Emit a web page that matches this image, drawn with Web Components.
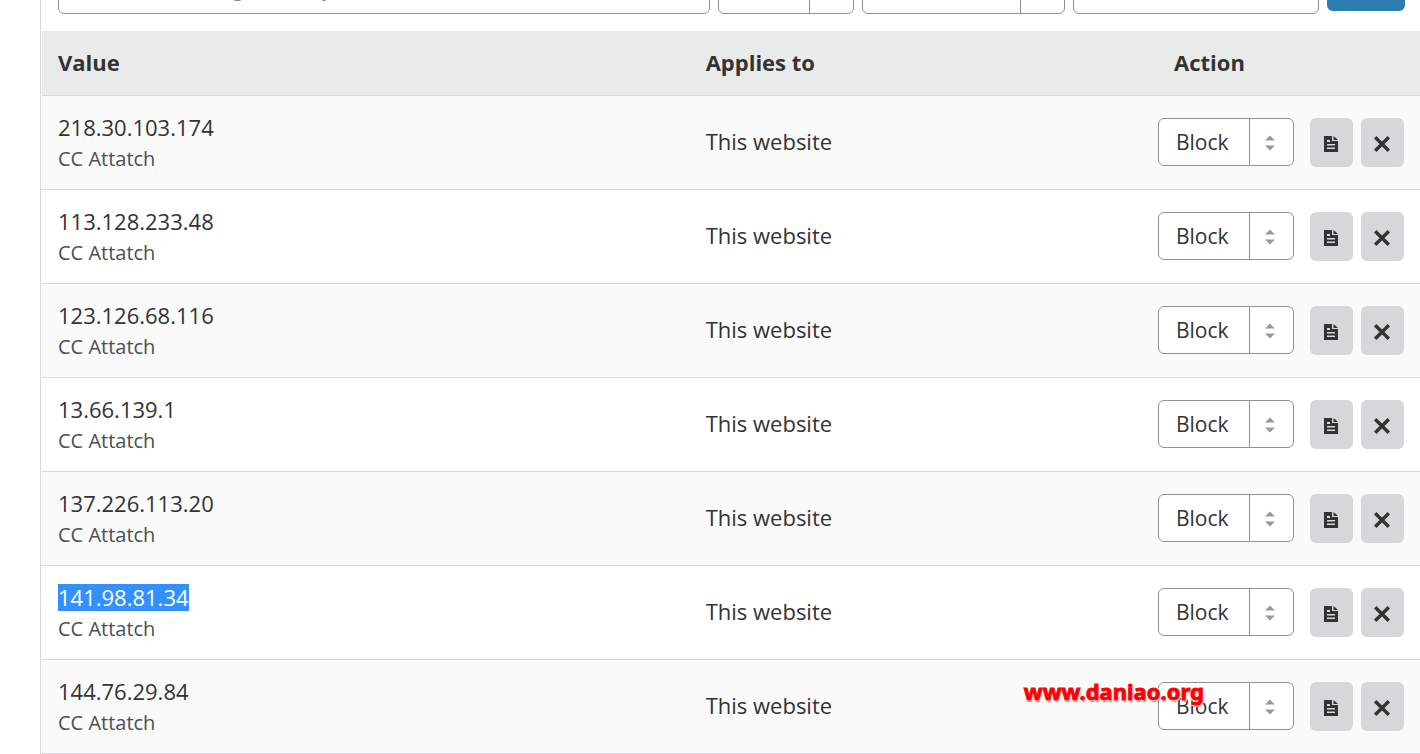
<!DOCTYPE html>
<html lang="en">
<head>
<meta charset="utf-8">
<title>IP Access Rules</title>
<style>
body{margin:0;background:#fff;color:#333;font:22px/30px "Open Sans","Noto Sans",sans-serif;overflow:hidden}
</style>
</head>
<body>
<access-rules></access-rules>
<site-mark>www.daniao.org</site-mark>
<script>
const define = (name, html, setup) => {
  const template = document.createElement('template');
  template.innerHTML = html;
  customElements.define(name, class extends HTMLElement {
    constructor() {
      super();
      this.attachShadow({mode: 'open'}).append(template.content.cloneNode(true));
    }
    connectedCallback() { if (setup) setup(this, this.shadowRoot); }
  });
};

define('rule-select', `
<style>
:host{display:grid;grid-template-columns:1fr 44px;width:136px;height:48px;box-sizing:border-box;border:1px solid #8d9296;border-radius:6px;background:#fff;overflow:hidden}
select{grid-area:1/1/2/3;appearance:none;border:0;margin:0;padding:0 48px 0 17px;background:transparent;color:#333;font:inherit;font-size:21px;width:100%;min-width:0;outline:0}
span{grid-area:1/2;border-left:1px solid #8d9296;display:grid;place-items:center;pointer-events:none}
svg{display:block;margin:2px 3px 0 0}
</style>
<select></select>
<span><svg width="10" height="16" viewBox="0 0 10 16" fill="#979b9e"><path d="M0 5.500 5 .5l5 5zM0 10.500h10l-5 5z"/></svg></span>`,
(host, root) => {
  const select = root.querySelector('select');
  select.setAttribute('aria-label', host.getAttribute('label'));
  select.replaceChildren(...host.getAttribute('options').split('|').map(text => new Option(text)));
});

define('icon-button', `
<style>
:host{display:block}
button{display:grid;place-items:center;width:43px;height:49px;padding:3px 1px 0 0;border:0;border-radius:6px;background:#d5d7d8;color:#333}
::slotted(svg){display:block}
</style>
<button type="button"><slot></slot></button>`,
(host, root) => root.querySelector('button').setAttribute('aria-label', host.getAttribute('label')));

define('rule-form', `
<style>
:host{display:block;height:14px;margin-bottom:17px;overflow:hidden}
form{display:flex;align-items:flex-end;gap:8px;height:100%;padding:0 15px 0 16px}
input{box-sizing:border-box;height:48px;min-width:0;border:1px solid #8d9296;border-radius:6px;padding:0 16px;font:inherit;font-size:19px;color:#333;background:#fff}
input::placeholder{color:#7f8386;opacity:1}
.target{flex:1}
.note{width:246px}
.scope{width:203px}
button{width:78px;height:46px;margin-bottom:3px;border:0;border-radius:6px;background:#2c7cb0;color:#fff}
</style>
<form>
<input class="target" aria-label="Address" placeholder="Enter an IP, IP range, country name, or ASN">
<rule-select label="Action" options="Block|Challenge"></rule-select>
<rule-select class="scope" label="Applies to" options="This website|All websites"></rule-select>
<input class="note" aria-label="Note">
<button type="button" aria-label="Add"></button>
</form>`);

define('rule-table', `
<style>
:host{display:block}
table{width:100%;border-collapse:separate;border-spacing:0;table-layout:fixed}
.value{width:47%}
.action{width:278px}
th,td{box-sizing:border-box;padding:0 16px;text-align:left;vertical-align:middle;border-bottom:1px solid #d5d7d8}
th{height:65px;padding-bottom:2px;background:#e9ebeb;font-weight:700}
th.action{padding-left:32px}
td{height:94px}
tbody tr:nth-child(odd){background:#fafafa}
.scope{padding-bottom:4px}
.ip{display:table;line-height:27px}
.picked{background:#3390ff;color:#fff}
.note{display:block;margin-top:4px;font-size:20px;line-height:27px;color:#4d4f51}
.tools{display:flex;gap:8px;align-items:flex-start}
rule-select{margin-right:8px}
</style>
<table>
<thead><tr><th class="value" scope="col">Value</th><th scope="col">Applies to</th><th class="action" scope="col">Action</th></tr></thead>
<tbody></tbody>
</table>`,
(host, root) => {
  const addresses = ['218.30.103.174', '113.128.233.48', '123.126.68.116', '13.66.139.1', '137.226.113.20', '141.98.81.34', '144.76.29.84'];
  root.querySelector('tbody').innerHTML = addresses.map(ip => `<tr>
<td><span class="ip${ip === '141.98.81.34' ? ' picked' : ''}">${ip}</span><span class="note">CC Attatch</span></td>
<td class="scope">This website</td>
<td><div class="tools">
<rule-select label="Action for ${ip}" options="Block|Challenge"></rule-select>
<icon-button label="Edit note"><svg width="14" height="16" viewBox="0 0 14 16"><path fill="#333" fill-rule="evenodd" d="M0 0h8v5h6v11H0zM3 4v2h3V4zM3 8v1.500h8V8zM3 11.500V13h8v-1.500z"/><path fill="#333" d="M9.500 0 14 4H9.500z"/></svg></icon-button>
<icon-button label="Delete rule"><svg width="16" height="16" viewBox="0 0 16 16"><path d="m1.200 1.200 13.600 13.600m0-13.600L1.200 14.800" stroke="#333" stroke-width="3.400"/></svg></icon-button>
</div></td></tr>`).join('');
});

define('access-rules', `
<style>
:host{display:block;margin-left:40px;border-left:1px solid #d5d7d8;padding-left:1px}
</style>
<rule-form></rule-form>
<rule-table></rule-table>`);

define('site-mark', `
<style>
:host{position:absolute;top:676px;right:216px;font:bold 22px/30px "Noto Sans","Open Sans",sans-serif;color:#f00;-webkit-text-stroke:1px #f00;text-shadow:-1px -1px #fff,1px -1px #fff,-1px 1px #fff,1px 1px #fff,1px 2px 1px #999}
</style>
<slot></slot>`);
</script>
</body>
</html>
